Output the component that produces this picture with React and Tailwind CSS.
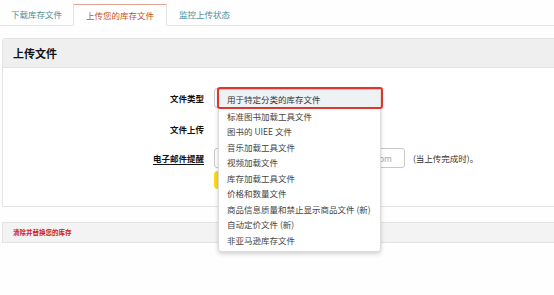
import React from 'react';

const options = [
  '标准图书加载工具文件',
  '图书的 UIEE 文件',
  '音乐加载工具文件',
  '视频加载文件',
  '库存加载工具文件',
  '价格和数量文件',
  '商品信息质量和禁止显示商品文件 (新)',
  '自动定价文件 (新)',
  '非亚马逊库存文件',
];

const FileTypeMenu = () => (
  <div className="absolute left-[218px] top-[88px] w-[163px] bg-white border border-[#dcdcdc] rounded-b-[3px] shadow-[0_2px_4px_rgba(0,0,0,0.18)] pb-[3px]">
    <div className="absolute -left-[2px] -top-[2px] w-[166px] h-[22px] border-2 border-[#e0352b] rounded-[3px]" />
    <div className="h-[19px] flex items-center pl-[8px] bg-[#eef2f5] border-t border-[#a9d0e0] text-[#333]">
      用于特定分类的库存文件
    </div>
    {options.map(o => (
      <div key={o} className="h-[15.5px] flex items-center pl-[8px] text-[#444]">{o}</div>
    ))}
  </div>
);

const App = () => {
  return (
    <div
      className="relative w-[554px] h-[295px] overflow-hidden bg-[#fdfefd] text-[8.5px] leading-none"
      style={{ fontFamily: '"Noto Sans CJK SC", "Noto Sans", sans-serif' }}
    >
      {/* tabs */}
      <div className="flex items-end h-[26px] border-b border-[#e6e8e6] pl-[11px]">
        <div className="h-[22px] flex items-center text-[#4d8e9c] pr-[11px]">下载库存文件</div>
        <div className="h-[22px] -mb-px flex items-center px-[12px] bg-white border border-[#e3e3e3] border-t-[#e0a592] border-b-white text-[#c4502a]">
          上传您的库存文件
        </div>
        <div className="h-[22px] flex items-center text-[#4d8e9c] pl-[12px]">监控上传状态</div>
      </div>

      {/* upload panel */}
      <div className="mt-[12px] ml-[2px] w-[570px] border border-[#e3e3e3] rounded-tl-[3px] bg-white">
        <div className="h-[29px] flex items-center px-[10px] bg-[#efefef] border-b border-[#e3e3e3] text-[11px] font-bold text-[#111]">
          上传文件
        </div>
        <div className="pt-[19px] pb-[17px] flex flex-col">
          <div className="h-[22px] flex items-center">
            <div className="w-[201px] text-right font-bold text-[#111]">文件类型</div>
            <div className="ml-[10px] w-[160px] h-[20px] border border-[#ccc] rounded-[3px]" />
          </div>
          <div className="mt-[9px] h-[22px] flex items-center">
            <div className="w-[201px] text-right font-bold text-[#111]">文件上传</div>
          </div>
          <div className="mt-[7px] h-[22px] flex items-center">
            <div className="w-[201px] flex justify-end">
              <span className="font-bold text-[#111] underline underline-offset-2">电子邮件提醒</span>
            </div>
            <div className="ml-[10px] w-[191px] h-[20px] border border-[#c9c9c9] rounded-[3px] flex items-center justify-end pr-[12px] text-[#aaa]">
              seller@example.com
            </div>
            <div className="ml-[8px] text-[#333]">(当上传完成时)。</div>
          </div>
          <div className="mt-[2px] ml-[211px] w-[90px] h-[18px] rounded-[4px] bg-[#ffd814]" />
        </div>
      </div>

      {/* replace inventory bar */}
      <div className="mt-[15px] ml-[2px] w-[570px] h-[21px] flex items-center px-[10px] bg-[#f3f3f3] border border-[#e3e3e3] text-[6.5px] font-bold text-[#d0201b]">
        清除并替换您的库存
      </div>

      <FileTypeMenu />
    </div>
  );
};

export default App;
